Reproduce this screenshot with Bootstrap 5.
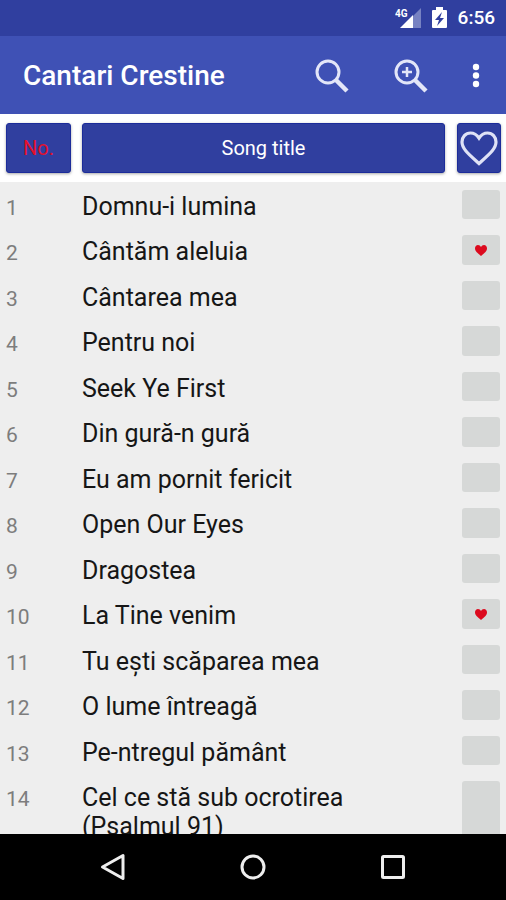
<!DOCTYPE html>
<html lang="ro">
<head>
<meta charset="utf-8">
<meta name="viewport" content="width=device-width, initial-scale=1">
<title>Cantari Crestine</title>
<link href="https://cdn.jsdelivr.net/npm/bootstrap@5.3.0/dist/css/bootstrap.min.css" rel="stylesheet">
<style>
  body { font-family: Roboto, "Liberation Sans", sans-serif; background: #eee; }
  svg { display: block; }
  .status-bar { height: 36px; background: #303f9f; font-size: 19px; font-weight: 500; gap: 11px; padding-right: 11px; }
  .app-bar { height: 78px; background: #3f51b5; padding: 2px 15px 0 23px; }
  .app-title { font-size: 28px; line-height: 32px; font-weight: 500; }
  .app-tools { gap: 45px; margin-right: 33px; }
  .icon-btn { background: none; color: #e3e6f8; line-height: 1; }
  .song-area { min-height: 0; }
  .song-table { table-layout: fixed; }
  .col-no { width: 76px; }
  .col-fav { width: 55px; }
  .song-table thead { background: #fff; }
  .song-table th { padding: 9px 6px; font-weight: 400; }
  .song-table th:first-child, .song-table th:last-child { padding-right: 5px; }
  .head-btn { height: 50px; width: 100%; background: #303f9f; border: 1px solid #1c2c9a; border-radius: 3px; color: #fff; font-size: 20px; line-height: 24px; box-shadow: 0 1px 3px rgba(0, 0, 0, .35); }
  .head-btn.sorted { color: #e3102c; }
  .song-table tbody tr { height: 45px; }
  .song-table tbody tr:nth-child(even) { height: 46px; }
  .song-table td { padding: 10px 6px 3px; vertical-align: baseline; line-height: 29px; }
  .song-table .song-no { color: #7d7d7d; font-size: 21px; }
  .song-table .song-name { color: #161616; font-size: 25px; }
  .song-table td.song-fav { height: 1px; padding: 8px 6px 8px 11px; vertical-align: top; }
  .fav-btn { width: 100%; height: 100%; min-height: 29px; background: #d6d8d7; border-radius: 3px; }
  .nav-keys { height: 66px; background: #000; padding: 0 43px; }
  .nav-keys .icon-btn { color: #eee; }
</style>
<script src="https://cdn.jsdelivr.net/npm/bootstrap@5.3.0/dist/js/bootstrap.bundle.min.js"></script>
</head>
<body class="vh-100 d-flex flex-column overflow-hidden">
<div class="status-bar flex-shrink-0 d-flex align-items-center justify-content-end text-white">
  <svg width="26" height="22" viewBox="0 0 26 22" role="img" aria-label="4G signal">
    <text x="0" y="10" font-size="10" font-weight="700" fill="#fff">4G</text>
    <path d="M26 1V21H18V9Z" fill="#7782c2"/><path d="M18 8V21H5Z" fill="#fff"/>
  </svg>
  <svg width="15" height="22" viewBox="0 0 15 22" role="img" aria-label="Battery charging">
    <path d="M4 0h7v3h3q1 0 1 1v16q0 1-1 1H1q-1 0-1-1V4q0-1 1-1h3z" fill="#fff"/><path d="M10 5 3 13h4l-2 6 7-8H8z" fill="#303f9f"/>
  </svg>
  <span>6:56</span>
</div>
<header class="app-bar flex-shrink-0 d-flex align-items-center text-white">
  <h1 class="app-title m-0 me-auto">Cantari Crestine</h1>
  <div class="app-tools d-flex">
    <button type="button" class="icon-btn border-0 p-0" aria-label="Search">
      <svg width="34" height="34" viewBox="0 0 34 34" fill="none" stroke="currentColor"><circle cx="13" cy="13" r="11" stroke-width="3"/><path d="M21 21 32 32" stroke-width="4.500"/></svg>
    </button>
    <button type="button" class="icon-btn border-0 p-0" aria-label="Zoom in">
      <svg width="34" height="34" viewBox="0 0 34 34" fill="none" stroke="currentColor"><circle cx="13" cy="13" r="11" stroke-width="3"/><path d="M21 21 32 32" stroke-width="4.500"/><path d="M13 8v10M8 13h10" stroke-width="2.500"/></svg>
    </button>
  </div>
  <button type="button" class="icon-btn border-0 p-0" aria-label="More options">
    <svg width="30" height="34" viewBox="0 0 30 34" fill="#fff"><circle cx="15" cy="8" r="3.200"/><circle cx="15" cy="16.500" r="3.200"/><circle cx="15" cy="25" r="3.200"/></svg>
  </button>
</header>
<main class="song-area flex-fill overflow-hidden">
  <table class="song-table w-100">
    <colgroup><col class="col-no"><col><col class="col-fav"></colgroup>
    <thead>
      <tr>
        <th scope="col"><button type="button" class="head-btn sorted p-0">No.</button></th>
        <th scope="col"><button type="button" class="head-btn p-0">Song title</button></th>
        <th scope="col"><button type="button" class="head-btn p-0 d-flex align-items-center justify-content-center" aria-label="Favourites"><svg width="38" height="35" viewBox="0 0 38 35" fill="none" stroke="#dfe2f6" stroke-width="3.200"><path d="M19 32.500C9 23.500 2 18 2 11 2 6 5.500 2 10.500 2 14 2 17 4 19 7 21 4 24 2 27.500 2 32.500 2 36 6 36 11 36 18 29 23.500 19 32.500Z"/></svg></button></th>
      </tr>
    </thead>
    <tbody>
      <tr><td class="song-no">1</td><td class="song-name">Domnu-i lumina</td><td class="song-fav"><button type="button" class="fav-btn border-0 p-0 d-block" aria-label="Favourite"></button></td></tr>
      <tr><td class="song-no">2</td><td class="song-name">Cântăm aleluia</td><td class="song-fav"><button type="button" class="fav-btn border-0 p-0 d-block" aria-label="Favourite"><svg class="mx-auto" width="12" height="11" viewBox="0 0 12 11"><path d="M6 11C2 7.500 0 6 0 3.200 0 1.400 1.300 0 3 0 4.300 0 5.400.7 6 2 6.600.7 7.700 0 9 0c1.700 0 3 1.400 3 3.200C12 6 10 7.500 6 11Z" fill="#dc0a1e"/></svg></button></td></tr>
      <tr><td class="song-no">3</td><td class="song-name">Cântarea mea</td><td class="song-fav"><button type="button" class="fav-btn border-0 p-0 d-block" aria-label="Favourite"></button></td></tr>
      <tr><td class="song-no">4</td><td class="song-name">Pentru noi</td><td class="song-fav"><button type="button" class="fav-btn border-0 p-0 d-block" aria-label="Favourite"></button></td></tr>
      <tr><td class="song-no">5</td><td class="song-name">Seek Ye First</td><td class="song-fav"><button type="button" class="fav-btn border-0 p-0 d-block" aria-label="Favourite"></button></td></tr>
      <tr><td class="song-no">6</td><td class="song-name">Din gură-n gură</td><td class="song-fav"><button type="button" class="fav-btn border-0 p-0 d-block" aria-label="Favourite"></button></td></tr>
      <tr><td class="song-no">7</td><td class="song-name">Eu am pornit fericit</td><td class="song-fav"><button type="button" class="fav-btn border-0 p-0 d-block" aria-label="Favourite"></button></td></tr>
      <tr><td class="song-no">8</td><td class="song-name">Open Our Eyes</td><td class="song-fav"><button type="button" class="fav-btn border-0 p-0 d-block" aria-label="Favourite"></button></td></tr>
      <tr><td class="song-no">9</td><td class="song-name">Dragostea</td><td class="song-fav"><button type="button" class="fav-btn border-0 p-0 d-block" aria-label="Favourite"></button></td></tr>
      <tr><td class="song-no">10</td><td class="song-name">La Tine venim</td><td class="song-fav"><button type="button" class="fav-btn border-0 p-0 d-block" aria-label="Favourite"><svg class="mx-auto" width="12" height="11" viewBox="0 0 12 11"><path d="M6 11C2 7.500 0 6 0 3.200 0 1.400 1.300 0 3 0 4.300 0 5.400.7 6 2 6.600.7 7.700 0 9 0c1.700 0 3 1.400 3 3.200C12 6 10 7.500 6 11Z" fill="#dc0a1e"/></svg></button></td></tr>
      <tr><td class="song-no">11</td><td class="song-name">Tu ești scăparea mea</td><td class="song-fav"><button type="button" class="fav-btn border-0 p-0 d-block" aria-label="Favourite"></button></td></tr>
      <tr><td class="song-no">12</td><td class="song-name">O lume întreagă</td><td class="song-fav"><button type="button" class="fav-btn border-0 p-0 d-block" aria-label="Favourite"></button></td></tr>
      <tr><td class="song-no">13</td><td class="song-name">Pe-ntregul pământ</td><td class="song-fav"><button type="button" class="fav-btn border-0 p-0 d-block" aria-label="Favourite"></button></td></tr>
      <tr><td class="song-no">14</td><td class="song-name">Cel ce stă sub ocrotirea<br>(Psalmul 91)</td><td class="song-fav"><button type="button" class="fav-btn border-0 p-0 d-block" aria-label="Favourite"></button></td></tr>
    </tbody>
  </table>
</main>
<nav class="nav-keys flex-shrink-0 d-flex align-items-center justify-content-around" aria-label="System">
  <button type="button" class="icon-btn border-0 p-0" aria-label="Back"><svg width="28" height="28" viewBox="0 0 28 28" fill="none" stroke="currentColor" stroke-width="3"><path d="M24 2.500V25.500L3.500 14Z" stroke-linejoin="round"/></svg></button>
  <button type="button" class="icon-btn border-0 p-0" aria-label="Home"><svg width="28" height="28" viewBox="0 0 28 28" fill="none" stroke="currentColor" stroke-width="3"><circle cx="14" cy="14" r="11"/></svg></button>
  <button type="button" class="icon-btn border-0 p-0" aria-label="Recent apps"><svg width="28" height="28" viewBox="0 0 28 28" fill="none" stroke="currentColor" stroke-width="3"><rect x="3.500" y="3.500" width="21" height="21" rx="1"/></svg></button>
</nav>
</body>
</html>
